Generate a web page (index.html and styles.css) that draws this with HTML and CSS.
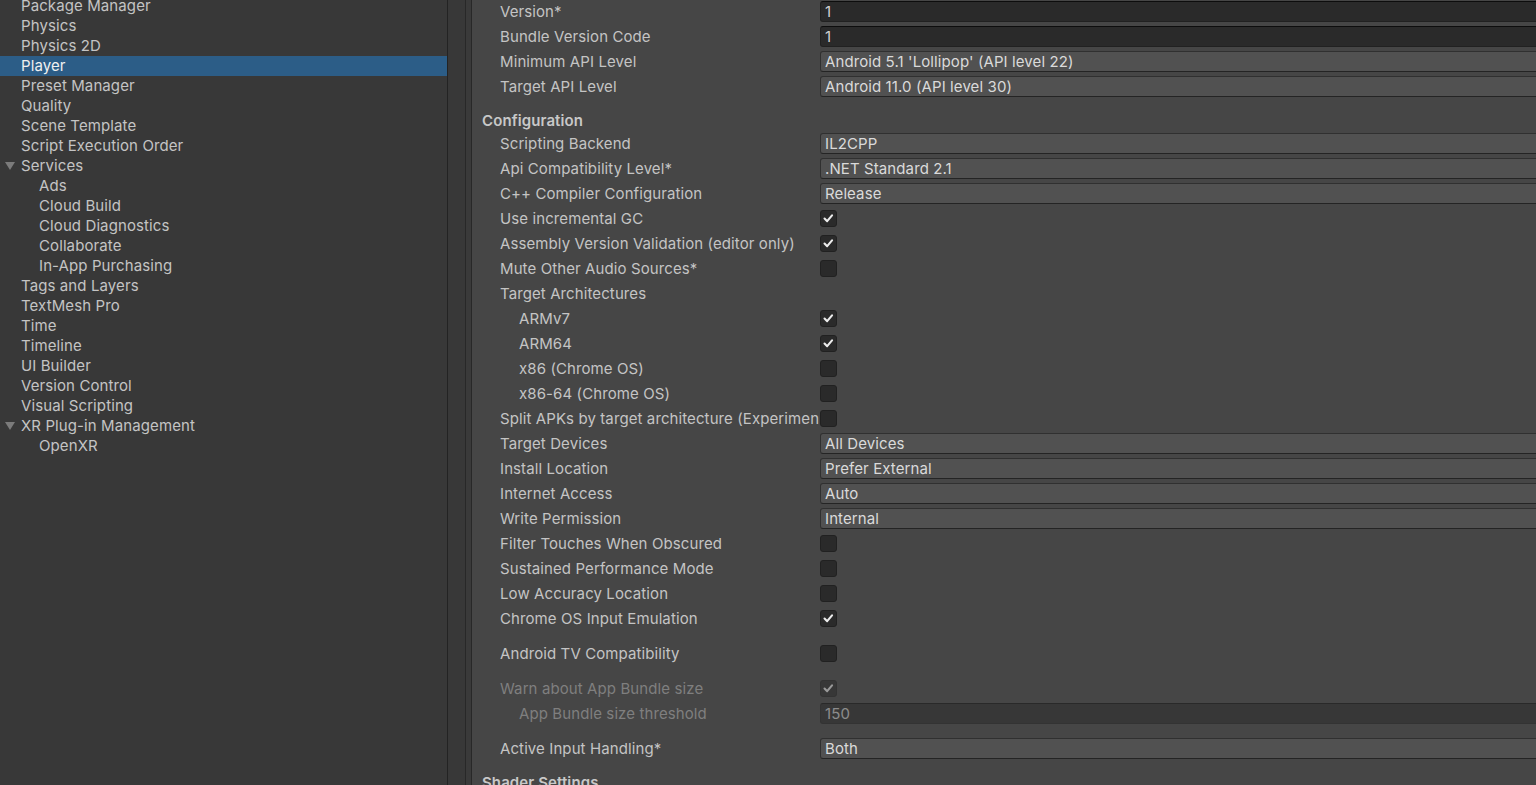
FILE: index.html
```html
<!DOCTYPE html>
<html>
<head>
<meta charset="utf-8">
<link rel="stylesheet" href="styles.css">
</head>
<body>
<div class="window">
  <nav class="tree">
    <div class="item">Package Manager</div>
    <div class="item">Physics</div>
    <div class="item">Physics 2D</div>
    <div class="item selected">Player</div>
    <div class="item">Preset Manager</div>
    <div class="item">Quality</div>
    <div class="item">Scene Template</div>
    <div class="item">Script Execution Order</div>
    <div class="item group"><span class="arrow"></span>Services</div>
    <div class="item sub">Ads</div>
    <div class="item sub">Cloud Build</div>
    <div class="item sub">Cloud Diagnostics</div>
    <div class="item sub">Collaborate</div>
    <div class="item sub">In-App Purchasing</div>
    <div class="item">Tags and Layers</div>
    <div class="item">TextMesh Pro</div>
    <div class="item">Time</div>
    <div class="item">Timeline</div>
    <div class="item">UI Builder</div>
    <div class="item">Version Control</div>
    <div class="item">Visual Scripting</div>
    <div class="item group"><span class="arrow"></span>XR Plug-in Management</div>
    <div class="item sub">OpenXR</div>
  </nav>
  <div class="splitter"></div>
  <div class="gutter"></div>
  <main class="inspector">
    <div class="content">
      <div class="prop"><span class="label">Version*</span><div class="field text">1</div></div>
      <div class="prop"><span class="label">Bundle Version Code</span><div class="field text">1</div></div>
      <div class="prop"><span class="label">Minimum API Level</span><div class="field dropdown">Android 5.1 'Lollipop' (API level 22)</div></div>
      <div class="prop"><span class="label">Target API Level</span><div class="field dropdown">Android 11.0 (API level 30)</div></div>

      <div class="header">Configuration</div>
      <div class="prop"><span class="label">Scripting Backend</span><div class="field dropdown">IL2CPP</div></div>
      <div class="prop"><span class="label">Api Compatibility Level*</span><div class="field dropdown">.NET Standard 2.1</div></div>
      <div class="prop"><span class="label">C++ Compiler Configuration</span><div class="field dropdown">Release</div></div>
      <div class="prop"><span class="label">Use incremental GC</span><span class="check on"><svg viewBox="0 0 17 17"><polyline points="4,8.5 7,11.5 12.5,5"/></svg></span></div>
      <div class="prop"><span class="label">Assembly Version Validation (editor only)</span><span class="check on"><svg viewBox="0 0 17 17"><polyline points="4,8.5 7,11.5 12.5,5"/></svg></span></div>
      <div class="prop"><span class="label">Mute Other Audio Sources*</span><span class="check"></span></div>
      <div class="prop"><span class="label">Target Architectures</span></div>
      <div class="prop"><span class="label nested">ARMv7</span><span class="check on"><svg viewBox="0 0 17 17"><polyline points="4,8.5 7,11.5 12.5,5"/></svg></span></div>
      <div class="prop"><span class="label nested">ARM64</span><span class="check on"><svg viewBox="0 0 17 17"><polyline points="4,8.5 7,11.5 12.5,5"/></svg></span></div>
      <div class="prop"><span class="label nested">x86 (Chrome OS)</span><span class="check"></span></div>
      <div class="prop"><span class="label nested">x86-64 (Chrome OS)</span><span class="check"></span></div>
      <div class="prop"><span class="label">Split APKs by target architecture (Experimen</span><span class="check"></span></div>
      <div class="prop"><span class="label">Target Devices</span><div class="field dropdown">All Devices</div></div>
      <div class="prop"><span class="label">Install Location</span><div class="field dropdown">Prefer External</div></div>
      <div class="prop"><span class="label">Internet Access</span><div class="field dropdown">Auto</div></div>
      <div class="prop"><span class="label">Write Permission</span><div class="field dropdown">Internal</div></div>
      <div class="prop"><span class="label">Filter Touches When Obscured</span><span class="check"></span></div>
      <div class="prop"><span class="label">Sustained Performance Mode</span><span class="check"></span></div>
      <div class="prop"><span class="label">Low Accuracy Location</span><span class="check"></span></div>
      <div class="prop"><span class="label">Chrome OS Input Emulation</span><span class="check on"><svg viewBox="0 0 17 17"><polyline points="4,8.5 7,11.5 12.5,5"/></svg></span></div>

      <div class="prop spaced"><span class="label">Android TV Compatibility</span><span class="check"></span></div>

      <div class="prop spaced disabled"><span class="label">Warn about App Bundle size</span><span class="check on"><svg viewBox="0 0 17 17"><polyline points="4,8.5 7,11.5 12.5,5"/></svg></span></div>
      <div class="prop disabled"><span class="label nested">App Bundle size threshold</span><div class="field text">150</div></div>

      <div class="prop spaced"><span class="label">Active Input Handling*</span><div class="field dropdown">Both</div></div>

      <div class="header">Shader Settings</div>
    </div>
  </main>
</div>
</body>
</html>
```

FILE: styles.css
```css
html, body {
  margin: 0;
  padding: 0;
  height: 100%;
  overflow: hidden;
}

body {
  font-family: Inter, "Noto Sans", sans-serif;
  font-size: 15px;
  letter-spacing: 0.1px;
  color: #c4c4c4;
  background: #383838;
}

.window {
  display: flex;
  height: 785px;
  width: 1536px;
  overflow: hidden;
}

.tree {
  flex: 0 0 447px;
  background: #383838;
  border-right: 1px solid #232323;
}

.tree .item:first-child {
  margin-top: -4px;
}

.item {
  display: flex;
  align-items: flex-start;
  height: 20px;
  line-height: 20px;
  padding-left: 21px;
  white-space: nowrap;
  color: #c4c4c4;
}

.item.sub {
  padding-left: 39px;
}

.item.group {
  padding-left: 5px;
}

.item.selected {
  background: #2c5d87;
  color: #f0f0f0;
}

.arrow {
  width: 0;
  height: 0;
  border-left: 5px solid transparent;
  border-right: 5px solid transparent;
  border-top: 8px solid #7b7b7b;
  margin-right: 6px;
  margin-top: 6px;
}

.splitter {
  flex: 0 0 17px;
  background: #383838;
  border-right: 1px solid #282828;
}

.gutter {
  flex: 0 0 5px;
  background: #3a3a3a;
  border-right: 1px solid #282828;
}

.inspector {
  flex: 1;
  background: #464646;
  overflow: hidden;
}

.content {
  margin-top: -1px;
  margin-right: -8px;
}

.prop {
  display: flex;
  align-items: center;
  height: 25px;
}

.prop.spaced {
  margin-top: 10px;
}

.label {
  flex: 0 0 348px;
  box-sizing: border-box;
  padding-left: 28px;
  padding-right: 3px;
  white-space: nowrap;
  overflow: hidden;
  color: #c4c4c4;
}

.label.nested {
  padding-left: 47px;
}

.header {
  height: 20px;
  line-height: 20px;
  padding: 12px 0 0 10px;
  font-weight: 600;
  color: #c8c8c8;
}

.field {
  flex: 1;
  height: 21px;
  line-height: 19px;
  box-sizing: border-box;
  border-radius: 3px;
  padding-left: 4px;
  color: #d2d2d2;
  white-space: nowrap;
}

.field.text {
  background: #2a2a2a;
  border: 1px solid #212121;
  border-top-color: #0d0d0d;
}

.field.dropdown {
  background: #515151;
  border: 1px solid #303030;
  border-bottom-color: #242424;
  color: #dadada;
}

.check {
  width: 17px;
  height: 17px;
  box-sizing: border-box;
  background: #2a2a2a;
  border: 1px solid #212121;
  border-radius: 3px;
  display: block;
}

.check svg {
  display: block;
  width: 15px;
  height: 15px;
}

.check polyline {
  fill: none;
  stroke: #ececec;
  stroke-width: 2.4;
  stroke-linecap: round;
  stroke-linejoin: round;
}

.disabled .label {
  color: #7f7f7f;
}

.disabled .check,
.disabled .field {
  opacity: 0.5;
}
```
